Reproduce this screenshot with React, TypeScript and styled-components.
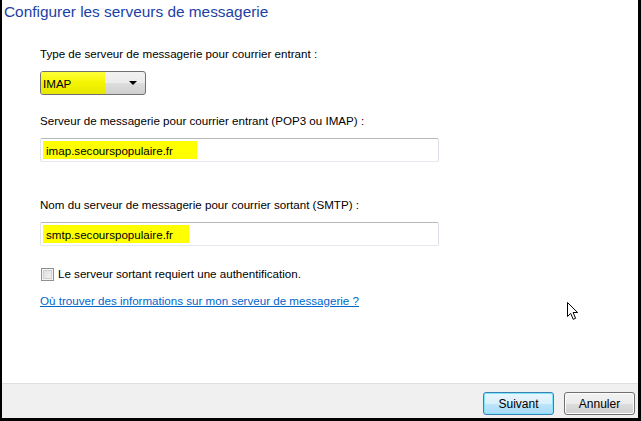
import React from 'react';
import styled, { createGlobalStyle } from 'styled-components';

const GlobalStyle = createGlobalStyle`
  html, body {
    margin: 0;
    padding: 0;
    background: #ffffff;
  }
  body {
    font-family: "Liberation Sans", Arial, sans-serif;
    font-size: 11.6px;
    color: #000000;
  }
`;

export default function App() {
  return (
    <>
      <GlobalStyle />
      <Window>
        <Title>Configurer les serveurs de messagerie</Title>
        <Content>
          <Label>Type de serveur de messagerie pour courrier entrant :</Label>
          <Select>
            <SelectValue>IMAP</SelectValue>
            <Arrow />
          </Select>

          <Label $gap={18}>Serveur de messagerie pour courrier entrant (POP3 ou IMAP) :</Label>
          <TextBox>
            <Highlight $width={154}>imap.secourspopulaire.fr</Highlight>
          </TextBox>

          <Label $gap={35}>Nom du serveur de messagerie pour courrier sortant (SMTP) :</Label>
          <TextBox>
            <Highlight $width={146}>smtp.secourspopulaire.fr</Highlight>
          </TextBox>

          <CheckRow>
            <CheckBox />
            <span>Le serveur sortant requiert une authentification.</span>
          </CheckRow>

          <HelpLink href="#">Où trouver des informations sur mon serveur de messagerie ?</HelpLink>

          <Cursor width="15" height="20" viewBox="0 0 15 20">
            <path
              d="M1.5 1.5 L1.5 15.5 L4.7 12.4 L7.2 18.3 L9.6 17.3 L7.1 11.5 L11.6 11.5 Z"
              fill="#ffffff"
              stroke="#000000"
              strokeWidth="1"
              strokeLinejoin="miter"
            />
          </Cursor>
        </Content>
        <Footer>
          <Button $primary>Suivant</Button>
          <Button>Annuler</Button>
        </Footer>
      </Window>
    </>
  );
}

const Window = styled.div`
  box-sizing: border-box;
  width: 641px;
  height: 421px;
  display: flex;
  flex-direction: column;
  background: #ffffff;
  border-left: 2px solid #000000;
  border-right: 3px solid #000000;
  border-bottom: 3px solid #000000;
`;

const Title = styled.h1`
  margin: 0;
  padding: 2px 0 0 2px;
  height: 24px;
  box-sizing: border-box;
  font-family: "Liberation Sans", Arial, sans-serif;
  font-weight: 400;
  font-size: 15.4px;
  line-height: 20px;
  color: #1c3fa6;
`;

const Content = styled.div`
  position: relative;
  flex: 1;
  display: flex;
  flex-direction: column;
  align-items: flex-start;
  padding: 22px 0 0 38px;
`;

const Label = styled.div<{ $gap?: number }>`
  margin-top: ${(p) => p.$gap ?? 0}px;
  line-height: 16px;
  height: 16px;
  white-space: nowrap;
`;

const Select = styled.div`
  box-sizing: border-box;
  margin-top: 9px;
  width: 106px;
  height: 24px;
  display: flex;
  align-items: stretch;
  border: 1px solid #707070;
  border-radius: 3px;
  background: linear-gradient(#f2f2f2 0%, #ebebeb 50%, #dddddd 51%, #cfcfcf 100%);
  overflow: hidden;
`;

const SelectValue = styled.div`
  width: 62px;
  padding-left: 2px;
  display: flex;
  align-items: center;
  background: linear-gradient(#ffff3a 0%, #f4f400 50%, #e6e600 100%);
`;

const Arrow = styled.div`
  margin: auto 8px auto auto;
  width: 0;
  height: 0;
  border-left: 4px solid transparent;
  border-right: 4px solid transparent;
  border-top: 4px solid #000000;
`;

const TextBox = styled.div`
  box-sizing: border-box;
  margin-top: 9px;
  width: 399px;
  height: 24px;
  padding: 2px;
  display: flex;
  align-items: stretch;
  border: 1px solid #abadb3;
  border-top-color: #b5b7bb;
  border-bottom-color: #e3e9ef;
  border-right-color: #dbdfe6;
  border-left-color: #e2e3ea;
  border-radius: 2px;
  background: #ffffff;
`;

const Highlight = styled.span<{ $width: number }>`
  width: ${(p) => p.$width}px;
  padding-left: 3px;
  box-sizing: border-box;
  display: flex;
  align-items: center;
  background: #ffff00;
  white-space: nowrap;
`;

const CheckRow = styled.label`
  margin-top: 20px;
  display: flex;
  align-items: center;
  gap: 4px;
  line-height: 16px;
  margin-left: 1px;
`;

const CheckBox = styled.span`
  box-sizing: border-box;
  width: 13px;
  height: 13px;
  border: 1px solid #8f8f8f;
  background: linear-gradient(135deg, #dcdcdc 0%, #f4f4f4 100%);
  box-shadow: inset 0 0 0 1px #f4f4f4, inset 0 0 0 2px #cfcfcf;
`;

const HelpLink = styled.a`
  margin-top: 11px;
  line-height: 16px;
  color: #0066cc;
  text-decoration: underline;
  white-space: nowrap;
`;

const Cursor = styled.svg`
  position: absolute;
  left: 564px;
  top: 277px;
`;

const Footer = styled.div`
  box-sizing: border-box;
  height: 35px;
  display: flex;
  justify-content: flex-end;
  align-items: flex-start;
  gap: 10px;
  padding: 8px 3px 0 0;
  border-top: 1px solid #dfdfdf;
  background: #f0f0f0;
`;

const Button = styled.button<{ $primary?: boolean }>`
  box-sizing: border-box;
  width: 71px;
  height: 23px;
  padding: 0;
  font-family: "Liberation Sans", Arial, sans-serif;
  font-size: 12px;
  color: #000000;
  border-radius: 3px;
  border: 1px solid ${(p) => (p.$primary ? '#3c7fb1' : '#707070')};
  background: ${(p) =>
    p.$primary
      ? 'linear-gradient(#eaf6fd 0%, #d9f0fc 50%, #bee6fd 51%, #a7d9f5 100%)'
      : 'linear-gradient(#f2f2f2 0%, #ebebeb 50%, #dddddd 51%, #cfcfcf 100%)'};
  box-shadow: inset 0 0 0 1px ${(p) => (p.$primary ? '#7ce4fb' : '#fcfcfc')};
`;
